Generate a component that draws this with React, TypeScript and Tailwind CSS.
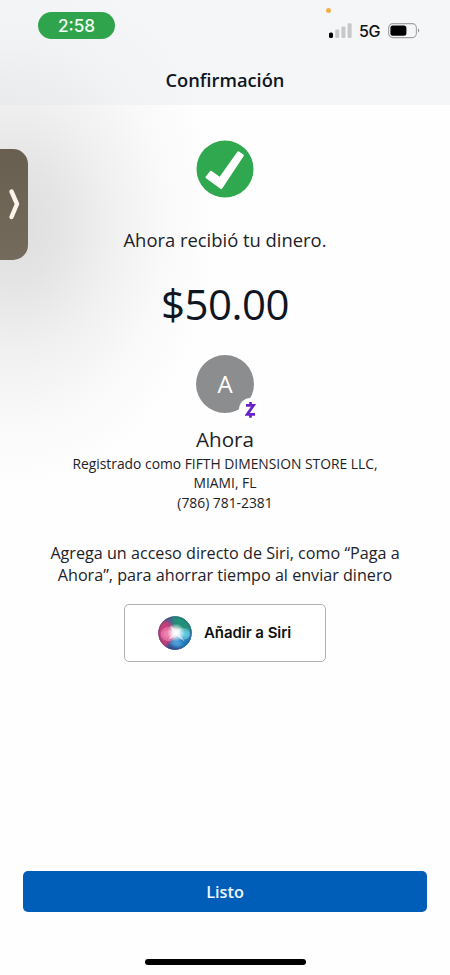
function StatusBar() {
  return (
    <div className="flex h-[52px] items-start justify-between pl-[38px] pr-[30px] pt-[12px]">
      <div className="flex h-[27px] w-[77px] items-center justify-center rounded-full bg-[#30a44c] pt-px font-['Inter',sans-serif] text-[17.2px] font-medium text-[#f1fff3]">
        2:58
      </div>
      <div className="relative flex items-center pt-[11px]">
        <span className="absolute left-[-3px] top-[-4px] size-[5px] rounded-full bg-[#eeb04f]" />
        <svg width="24" height="16" viewBox="0 0 24 16">
          <rect x="0" y="9.5" width="4" height="5.5" rx="1.6" fill="#000" />
          <rect x="6.2" y="6.5" width="4" height="8.5" rx="1.2" fill="#c7c8ca" />
          <rect x="12.4" y="3.5" width="4" height="11.5" rx="1.2" fill="#c7c8ca" />
          <rect x="18.6" y="0.3" width="4" height="14.7" rx="1.2" fill="#c7c8ca" />
        </svg>
        <span className="ml-[6px] w-[22px] whitespace-nowrap font-['Inter',sans-serif] text-[16px] font-medium leading-4 tracking-[-0.4px] text-[#111]">5G</span>
        <svg className="ml-[7px]" width="32" height="16" viewBox="0 0 32 16">
          <rect x="0.6" y="0.6" width="27.8" height="14" rx="4.3" fill="none" stroke="#a1a2a4" strokeWidth="1.1" />
          <rect x="2.4" y="2.4" width="16" height="10.4" rx="2.5" fill="#000" />
          <path d="M30 5.6c1.6.7 1.6 3.3 0 4z" fill="#8f9092" />
        </svg>
      </div>
    </div>
  );
}

function SiriOrb() {
  return (
    <svg width="34" height="34" viewBox="0 0 34 34">
      <defs>
        <clipPath id="orb">
          <circle cx="17" cy="17" r="16.7" />
        </clipPath>
        <radialGradient id="glow">
          <stop offset="0" stopColor="#fff" />
          <stop offset="0.4" stopColor="#fff" stopOpacity="0.8" />
          <stop offset="1" stopColor="#fff" stopOpacity="0" />
        </radialGradient>
        <filter id="soft" x="-50%" y="-50%" width="200%" height="200%">
          <feGaussianBlur stdDeviation="1.7" />
        </filter>
      </defs>
      <g clipPath="url(#orb)">
        <rect width="34" height="34" fill="#4a5f8c" />
        <g filter="url(#soft)">
          <path d="M13-4h26v21H17z" fill="#249078" />
          <path d="M-6 5h16l8 12-9 17H-6z" fill="#c63a78" />
          <path d="M17 17l22-2v26H15z" fill="#1c78b8" />
          <path d="M5 40l4-12 9-8 6 20z" fill="#2f4f96" />
          <ellipse cx="26" cy="18" rx="5.5" ry="4.5" fill="#62cbe2" />
          <ellipse cx="10" cy="18" rx="6" ry="5.5" fill="#ee7fb0" />
          <path d="M12 28l6-8 7 8-6 3z" fill="#4b9fd8" />
        </g>
        <ellipse cx="11" cy="18" rx="7.5" ry="6.5" fill="none" stroke="#ffc9e2" strokeOpacity="0.5" strokeWidth="0.7" />
        <ellipse cx="25" cy="18" rx="6" ry="5" fill="none" stroke="#b9f3fa" strokeOpacity="0.5" strokeWidth="0.7" />
        <circle cx="18" cy="16.5" r="9" fill="url(#glow)" />
        <path d="M12 9l6 5 5-2-2 5 6 9-8-6-9 4 5-7z" fill="#fff" fillOpacity="0.5" />
        <circle cx="17" cy="17" r="16" fill="none" stroke="#354c70" strokeOpacity="0.4" strokeWidth="1.2" />
      </g>
    </svg>
  );
}

export default function App() {
  return (
    <div className="relative flex h-[975px] w-[450px] flex-col overflow-hidden bg-white font-['Open_Sans',sans-serif] text-[#1c2228]">
      <header className="h-[105px] shrink-0 bg-[#f5f6f8] bg-[radial-gradient(circle_at_0px_190px,#e2e4e6_0px,#e9ebed_90px,#f1f2f4_150px,#f5f6f8_220px)]">
        <StatusBar />
        <h1 className="mt-[14px] text-center text-[18.3px] font-semibold leading-7 text-[#10161d]">Confirmación</h1>
      </header>

      <main className="flex flex-1 flex-col items-center bg-[#fefefe] bg-[radial-gradient(ellipse_200px_260px_at_15px_120px,#dedede_0%,#e4e4e4_22%,#f0f0f0_48%,#f9f9f9_75%,#fefefe_100%)] pt-[35px]">
        <svg width="58" height="58" viewBox="0 0 58 58">
          <circle cx="29" cy="29" r="28.5" fill="#2fa84f" />
          <path d="M9.8 36.5l4.2-5.2q.7-.8 1.6-.2l8.1 5.6 17.7-25q.6-.9 1.5-.3l4.5 3.2q.9.6.3 1.5L26.2 48.4q-.7 1-1.7.3L10 38.2q-.9-.7-.2-1.7z" fill="#fff" />
        </svg>
        <p className="mt-[28px] text-[18.4px] leading-7">Ahora recibió tu dinero.</p>
        <p className="mt-[24px] text-[42px] leading-[52px] tracking-[-0.5px] text-[#0e161f]">$50.00</p>

        <div className="relative mt-[25px] flex size-[58px] items-center justify-center rounded-full bg-[#8b8d8f] text-[24px] text-white">
          A
          <span className="absolute left-[43px] top-[43px] flex size-[23px] items-center justify-center rounded-full bg-white">
            <svg width="11" height="18" viewBox="0 0 11 18" fill="none" stroke="#6b22c8" strokeWidth="2.7">
              <path d="M1 4.3h7.6L2.2 13.3H10M5.5 1v3M5.5 13.5v3.2" />
            </svg>
          </span>
        </div>

        <h2 className="mt-[12px] text-[20.6px] leading-7">Ahora</h2>
        <div className="mt-px text-center text-[13.85px] leading-[19.4px]">
          <p>Registrado como FIFTH DIMENSION STORE LLC,</p>
          <p>MIAMI, FL</p>
          <p>(786) 781-2381</p>
        </div>

        <p className="mt-[30px] text-center text-[16.15px] leading-[22px]">
          Agrega un acceso directo de Siri, como “Paga a
          <br />
          Ahora”, para ahorrar tiempo al enviar dinero
        </p>

        <button className="mt-[18px] flex h-[58px] w-[202px] items-center rounded-[5px] border border-[#afb0b1] bg-white pl-[33px] font-['Inter',sans-serif] text-[15px] font-semibold text-[#111]">
          <SiriOrb />
          <span className="ml-[12px] whitespace-nowrap pt-px tracking-[-0.05px]">Añadir a Siri</span>
        </button>
      </main>

      <footer className="flex h-[104px] shrink-0 flex-col items-center bg-[#fefefe]">
        <button className="h-[41px] w-[404px] rounded-[5px] bg-[#005eb8] pt-px text-[16.3px] font-semibold text-[#eef6ff]">Listo</button>
        <div className="mt-[47px] h-[6px] w-[161px] rounded-full bg-black" />
      </footer>

      <div className="absolute left-0 top-[149px] flex h-[111px] w-[27.5px] items-center justify-end rounded-r-[15px] bg-linear-to-b from-[#685f50] to-[#746b5c]">
        <svg className="mr-[7px]" width="13" height="34" viewBox="0 0 13 34" fill="none" stroke="#fff3e9" strokeWidth="4.4" strokeLinecap="round" strokeLinejoin="round">
          <path d="M3.5 3.5l5.5 12.5-5.5 13" />
        </svg>
      </div>
    </div>
  );
}
